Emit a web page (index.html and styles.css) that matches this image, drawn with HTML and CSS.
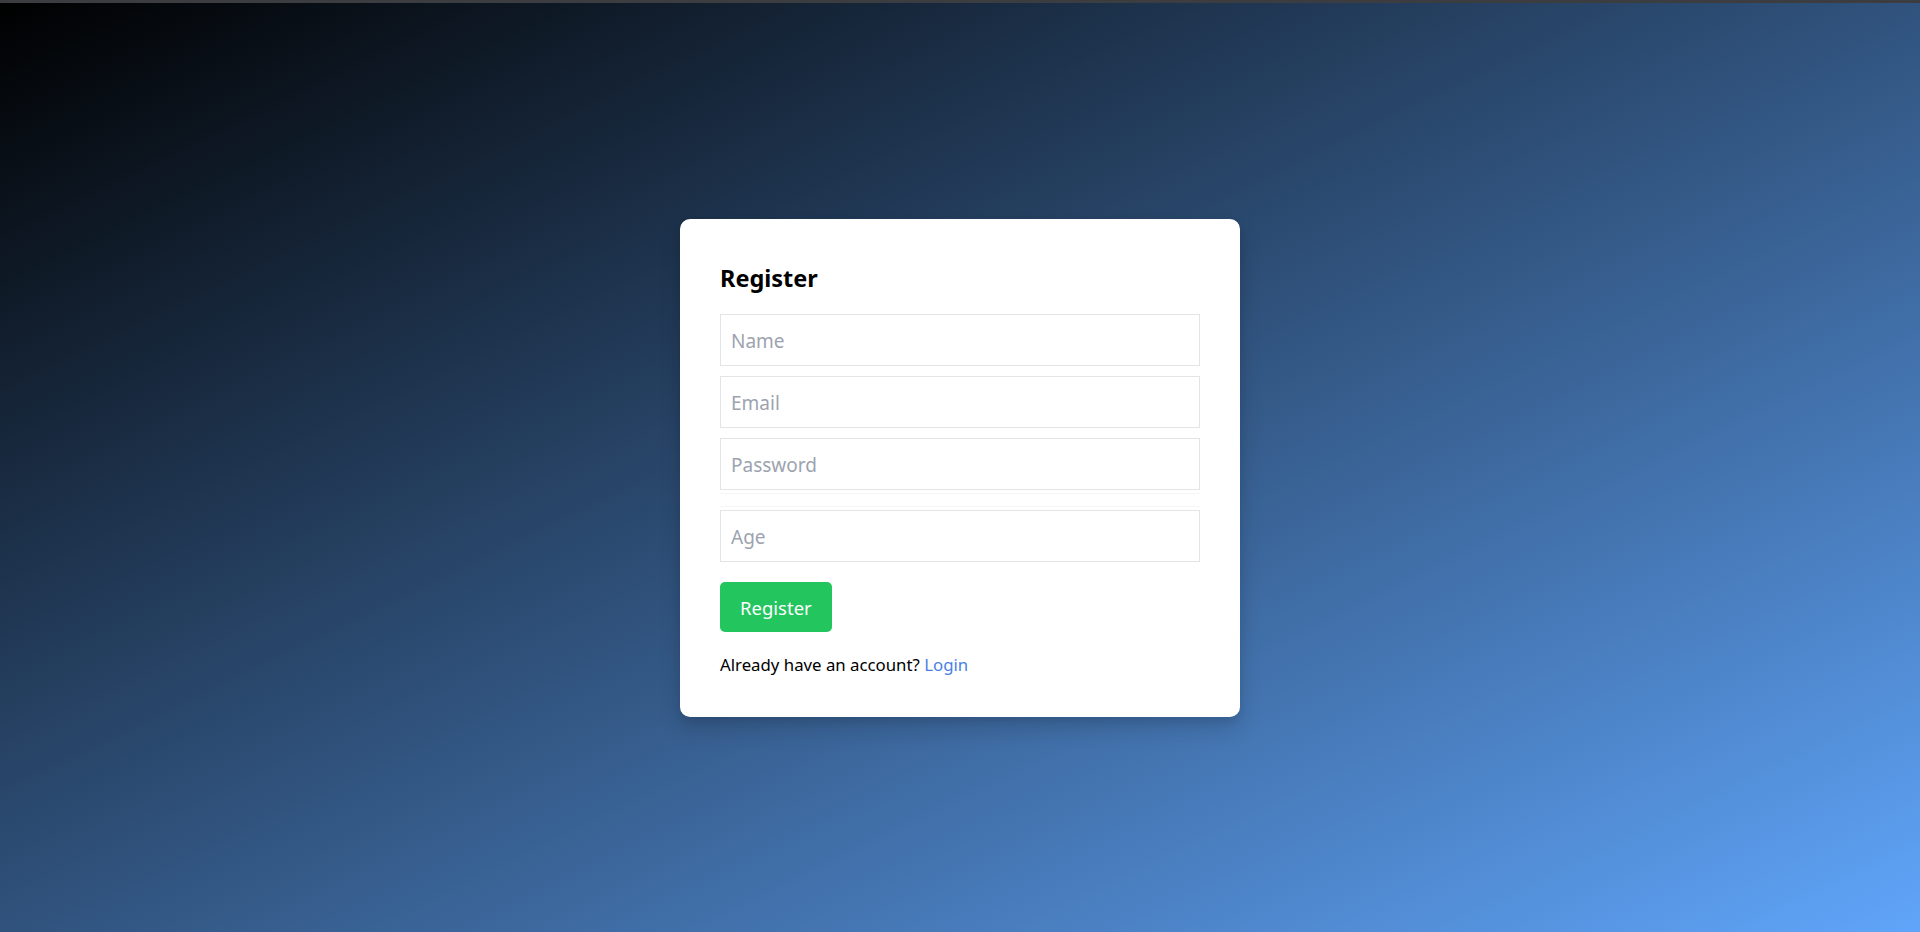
FILE: index.html
```html
<!DOCTYPE html>
<html lang="en">
<head>
<meta charset="utf-8">
<title>Register</title>
<link rel="stylesheet" href="styles.css">
</head>
<body>
<div class="topline"></div>
<main class="page">
  <form class="card">
    <h2 class="title">Register</h2>
    <input class="field" type="text" placeholder="Name">
    <input class="field" type="email" placeholder="Email">
    <input class="field last" type="password" placeholder="Password">
    <div class="ghost"></div>
    <input class="field age" type="number" placeholder="Age">
    <button class="btn" type="button">Register</button>
    <p class="note">Already have an account? <a class="link" href="#">Login</a></p>
  </form>
</main>
</body>
</html>
```
FILE: styles.css
```css
* { box-sizing: border-box; }
html, body { margin: 0; padding: 0; height: 100%; }
body {
  font-family: "Noto Sans", "Open Sans", sans-serif;
  background: linear-gradient(to bottom right, #000000, #60a5fa);
  display: flex;
  flex-direction: column;
  overflow: hidden;
}
.topline { height: 3px; background: #3c3d40; flex: none; }
.page {
  flex: 1;
  display: flex;
  align-items: center;
  justify-content: center;
}
.card {
  width: 560px;
  background: #ffffff;
  border-radius: 10px;
  padding: 40px;
  box-shadow: 0 12px 22px rgba(0, 0, 0, 0.14), 0 4px 8px rgba(0, 0, 0, 0.08);
  display: flex;
  flex-direction: column;
}
.title {
  margin: 0 0 18px;
  padding-top: 2px;
  font-size: 23.5px;
  line-height: 35px;
  font-weight: 700;
  color: #000;
}
.field {
  display: block;
  width: 100%;
  height: 52px;
  margin: 0 0 10px;
  padding: 2px 10px 0;
  border: 1px solid #e3e4e7;
  border-radius: 0;
  font-family: inherit;
  font-size: 19px;
  color: #111;
  background: #fff;
  outline: none;
}
.field::placeholder { color: #9ca3af; }
.field.last { margin-bottom: 3px; }
.ghost {
  height: 14px;
  margin-bottom: 3px;
  border-top: 1px solid #f6f6f7;
  border-bottom: 1px solid #f6f6f7;
}
.field.age { margin-bottom: 20px; -moz-appearance: textfield; }
.field.age::-webkit-outer-spin-button,
.field.age::-webkit-inner-spin-button { -webkit-appearance: none; margin: 0; }
.btn {
  align-self: flex-start;
  height: 50px;
  padding: 2px 20px 0;
  border: none;
  border-radius: 5px;
  background: #22c55e;
  color: #fff;
  font-family: inherit;
  font-size: 18.5px;
  cursor: pointer;
}
.note {
  margin: 21px 0 0;
  font-size: 16.8px;
  line-height: 24px;
  color: #000;
}
.link { color: #4a7fe6; text-decoration: none; }
```
